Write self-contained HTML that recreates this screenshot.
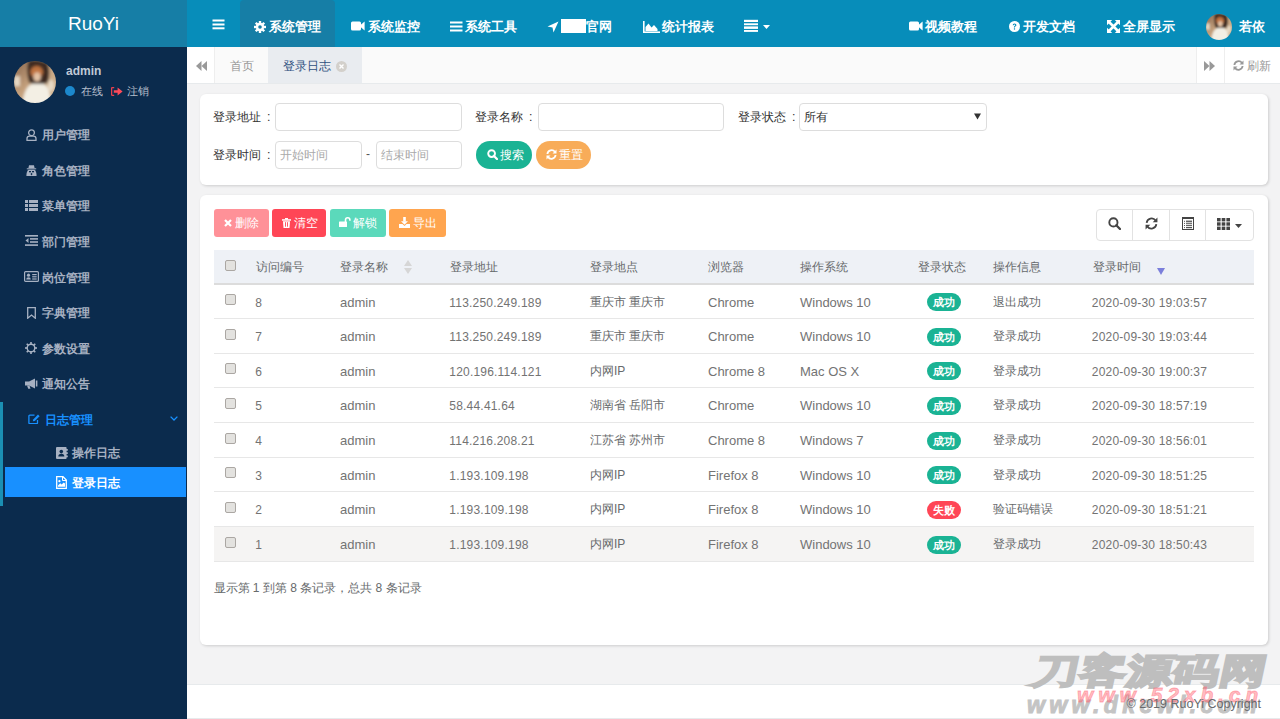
<!DOCTYPE html>
<html><head><meta charset="utf-8">
<style>
*{box-sizing:border-box;margin:0;padding:0}
html,body{width:1280px;height:719px;overflow:hidden}
body{position:relative;background:#f3f3f4;font-family:"Liberation Sans",sans-serif;font-size:12px;color:#676a6c}
.a{position:absolute}
.t{position:absolute;white-space:nowrap;line-height:20px}
#side{left:0;top:0;width:187px;height:719px;background:#0b2b4d}
#logo{left:0;top:0;width:187px;height:47px;background:#167ea6;color:#fff;font-size:19px;text-align:center;line-height:47px}
#nav{left:187px;top:0;width:1093px;height:47px;background:#078dba}
.ni{color:#fff;font-weight:bold;font-size:13px}
#tabs{left:187px;top:47px;width:1093px;height:37px;background:#fafafa;border-bottom:1px solid #e7eaec}
.panel{background:#fff;border-radius:6px;box-shadow:1px 1px 3px rgba(0,0,0,.16)}
.lbl{color:#333;font-size:12.3px;margin-left:-1px}
.inp{background:#fff;border:1px solid #ddd;border-radius:4px}
.btn{color:#fff;font-size:12px;text-align:center;border-radius:3px;line-height:28px}
.mi{font-size:12px;font-weight:600;color:#a7b1c2}
.avatar{border-radius:50%;background:radial-gradient(circle at 50% 65%,#f3eee6 0,#e9e0d2 22%,#c9a98a 45%,#8a6247 70%,#5d3f2d 100%)}
.th{color:#676a6c;font-size:12px}
.td{color:#737373;font-size:13px;margin-top:0.8px}
.tdn{font-size:12px;letter-spacing:0.2px;margin-left:-0.7px}
.tdc{font-size:12px;color:#676a6c;margin-top:0}
.row{left:213px;width:1041px;height:35px;border-bottom:1px solid #e7eaec}
.cb{width:11px;height:11px;border:1px solid #aba7a3;border-radius:2px;background:#e3e2df}
.badge{width:34px;height:18px;border-radius:9px;color:#fff;font-weight:bold;font-size:11px;text-align:center;line-height:18px}
</style></head><body>


<div id="side" class="a">
  <div id="logo" class="a">RuoYi</div>
  <svg class="a" style="left:14px;top:61px" width="42" height="42" viewBox="0 0 50 50"><defs><clipPath id="av1"><circle cx="25" cy="25" r="25"/></clipPath><filter id="av1f" x="-10%" y="-10%" width="120%" height="120%"><feGaussianBlur stdDeviation="1.6"/></filter><linearGradient id="av1g" x1="0" y1="0" x2="1" y2="1"><stop offset="0" stop-color="#7a5a44"/><stop offset="0.45" stop-color="#c4a07c"/><stop offset="1" stop-color="#dcc3a2"/></linearGradient></defs><g clip-path="url(#av1)"><g filter="url(#av1f)"><rect x="-5" y="-5" width="60" height="60" fill="url(#av1g)"/><rect x="0" y="18" width="7" height="12" fill="#f4ecdc" opacity=".8"/><path d="M17 0 Q28 -3 40 2 Q44 14 40 26 Q30 30 18 26 Q14 12 17 0 Z" fill="#3d2b22"/><ellipse cx="27" cy="13" rx="7.5" ry="7" fill="#c0733f"/><ellipse cx="27.5" cy="19" rx="4.5" ry="5.5" fill="#e4c3a6"/><path d="M10 52 Q12 30 22 27 H34 Q44 29 43 52 Z" fill="#f3efe4"/><ellipse cx="44" cy="29" rx="3.5" ry="7" fill="#efe6d4" opacity=".8"/></g></g></svg>
  <div class="t" style="left:66px;top:61px;font-size:12px;font-weight:bold;color:#c0c9d6">admin</div>
  <div class="a" style="left:65px;top:86px;width:10px;height:10px;border-radius:50%;background:#1c88cc"></div>
  <div class="t" style="left:81px;top:81px;font-size:11px;color:#b5becb">在线</div>
  <svg class="a" style="left:111px;top:87px" width="12" height="9" viewBox="0 0 12 9"><path d="M3.2 0.6 H1.4 Q0.6 0.6 0.6 1.4 V7.6 Q0.6 8.4 1.4 8.4 H3.2" fill="none" stroke="#e8404f" stroke-width="1.3"/><path d="M2.8 3.2 H6.6 V0.4 L11.6 4.5 L6.6 8.6 V5.8 H2.8 Z" fill="#ff4a5a"/></svg>
  <div class="t" style="left:127px;top:81px;font-size:11px;color:#b5becb">注销</div>
<svg class="a" style="left:26px;top:128.5px" width="11" height="12" viewBox="0 0 11 12"><circle cx="5.5" cy="3.8" r="2.9" fill="none" stroke="#a7b1c2" stroke-width="1.3"/><path d="M1 11.3 V9.5 Q1 7.2 3.5 7.2 H7.5 Q10 7.2 10 9.5 V11.3 Z" fill="none" stroke="#a7b1c2" stroke-width="1.3"/></svg>
<div class="t mi" style="left:42px;top:125px">用户管理</div>
<svg class="a" style="left:26px;top:164.5px" width="11" height="11" viewBox="0 0 11 11"><g fill="#a7b1c2"><path d="M3 0.3 H8 L8.6 3.2 H2.4 Z"/><rect x="0.8" y="3.3" width="9.4" height="1"/><path d="M2.6 4.8 H8.4 Q10.6 6 10.6 11 H0.4 Q0.4 6 2.6 4.8 Z"/></g><g fill="#0b2b4d"><rect x="3" y="6" width="2" height="1.3"/><rect x="6" y="6" width="2" height="1.3"/><path d="M4.5 9 L5.5 7.8 L6.5 9 L5.5 10.5 Z"/></g></svg>
<div class="t mi" style="left:42px;top:160.5px">角色管理</div>
<svg class="a" style="left:25px;top:199.5px" width="13" height="11" viewBox="0 0 13 11"><g fill="#a7b1c2"><rect x="0" y="0" width="3" height="3"/><rect x="4" y="0" width="9" height="3"/><rect x="0" y="4" width="3" height="3"/><rect x="4" y="4" width="9" height="3"/><rect x="0" y="8" width="3" height="3"/><rect x="4" y="8" width="9" height="3"/></g></svg>
<div class="t mi" style="left:42px;top:196px">菜单管理</div>
<svg class="a" style="left:25px;top:235px" width="13" height="11" viewBox="0 0 13 11"><g fill="#a7b1c2"><rect x="0" y="0" width="13" height="1.6"/><rect x="5" y="3.1" width="8" height="1.6"/><rect x="5" y="6.2" width="8" height="1.6"/><rect x="0" y="9.3" width="13" height="1.6"/><path d="M3.5 3 L0.5 5.5 L3.5 8 Z"/></g></svg>
<div class="t mi" style="left:42px;top:231.5px">部门管理</div>
<svg class="a" style="left:24px;top:271px" width="15" height="11" viewBox="0 0 15 11"><rect x="0.6" y="0.6" width="13.8" height="9.8" rx="1" fill="none" stroke="#a7b1c2" stroke-width="1.2"/><circle cx="4.5" cy="4.2" r="1.6" fill="#a7b1c2"/><path d="M2.2 8.6 Q2.2 6.3 4.5 6.3 Q6.8 6.3 6.8 8.6 Z" fill="#a7b1c2"/><rect x="8.2" y="3" width="4.5" height="1.2" fill="#a7b1c2"/><rect x="8.2" y="5.2" width="4.5" height="1.2" fill="#a7b1c2"/><rect x="8.2" y="7.4" width="4.5" height="1.2" fill="#a7b1c2"/></svg>
<div class="t mi" style="left:42px;top:267.5px">岗位管理</div>
<svg class="a" style="left:27px;top:306.5px" width="9" height="12" viewBox="0 0 9 12"><path d="M0.7 0.7 H8.3 V11.2 L4.5 8 L0.7 11.2 Z" fill="none" stroke="#a7b1c2" stroke-width="1.3"/></svg>
<div class="t mi" style="left:42px;top:303px">字典管理</div>
<svg class="a" style="left:25px;top:342px" width="12" height="12" viewBox="0 0 12 12"><circle cx="6" cy="6" r="3.8" fill="none" stroke="#a7b1c2" stroke-width="1.4"/><g fill="#a7b1c2"><rect x="5.2" y="0" width="1.6" height="2.2"/><rect x="5.2" y="9.8" width="1.6" height="2.2"/><rect x="0" y="5.2" width="2.2" height="1.6"/><rect x="9.8" y="5.2" width="2.2" height="1.6"/><rect x="5.2" y="0" width="1.6" height="2.2" transform="rotate(45 6 6)"/><rect x="5.2" y="9.8" width="1.6" height="2.2" transform="rotate(45 6 6)"/><rect x="0" y="5.2" width="2.2" height="1.6" transform="rotate(45 6 6)"/><rect x="9.8" y="5.2" width="2.2" height="1.6" transform="rotate(45 6 6)"/></g></svg>
<div class="t mi" style="left:42px;top:338.5px">参数设置</div>
<svg class="a" style="left:25px;top:377.5px" width="13" height="11" viewBox="0 0 13 11"><g fill="#a7b1c2"><path d="M0 3.5 H4 L10 0.5 V10.5 L4 7.5 H0 Z"/><rect x="10.8" y="2.5" width="1.6" height="6"/><path d="M2 7.5 H4.5 L5.5 10.8 H3.2 Z"/></g></svg>
<div class="t mi" style="left:42px;top:374px">通知公告</div>
  <div class="a" style="left:0;top:402px;width:3px;height:104px;background:#1b8fb3"></div>
  <svg class="a" style="left:27.5px;top:413.8px" width="13" height="10.5" viewBox="0 0 13 10.5"><path d="M6.5 1.2 H1.8 Q0.9 1.2 0.9 2.1 V8.8 Q0.9 9.7 1.8 9.7 H8.6 Q9.5 9.7 9.5 8.8 V6" fill="none" stroke="#1890ff" stroke-width="1.3"/><path d="M4.8 7.2 L5.2 5.4 L10 0.6 L11.6 2.2 L6.8 7 Z" fill="#1890ff"/></svg>
  <div class="t mi" style="left:45px;top:409.5px;color:#1890ff">日志管理</div>
  <svg class="a" style="left:170px;top:416px" width="8" height="5" viewBox="0 0 8 5"><path d="M0.6 0.6 L4 4 L7.4 0.6" fill="none" stroke="#1890ff" stroke-width="1.3"/></svg>
  <svg class="a" style="left:55.5px;top:446.5px" width="12" height="12" viewBox="0 0 12 12"><path d="M0 1 Q0 0 1 0 H9.8 Q10.6 0 10.6 1 V2 H11.8 V3.8 H10.6 V5.2 H11.8 V7 H10.6 V8.4 H11.8 V10.2 H10.6 V11 Q10.6 12 9.8 12 H1 Q0 12 0 11 Z" fill="#a7b1c2"/><circle cx="5.3" cy="4.6" r="1.8" fill="#0b2b4d"/><path d="M2.3 9.6 Q2.3 6.8 5.3 6.8 Q8.3 6.8 8.3 9.6 Z" fill="#0b2b4d"/></svg>
  <div class="t mi" style="left:72px;top:443px">操作日志</div>
  <div class="a" style="left:5px;top:467px;width:181px;height:30px;background:#1890ff"></div>
  <svg class="a" style="left:56px;top:476px" width="11" height="13" viewBox="0 0 11 13"><path d="M0.7 0.7 H7 L10.3 4 V12.3 H0.7 Z" fill="none" stroke="#fff" stroke-width="1.3"/><path d="M6.5 0.7 V4.5 H10.3" fill="none" stroke="#fff" stroke-width="1"/><path d="M2 10.8 V9.5 L4.2 7.2 L5.6 8.6 L7.8 6.4 L9 7.6 V10.8 Z" fill="#fff"/><circle cx="3.4" cy="5.2" r="1.1" fill="#fff"/></svg>
  <div class="t mi" style="left:72px;top:472.5px;color:#fff">登录日志</div>
</div>

<div id="nav" class="a"></div>

<div class="a" style="left:187px;top:0;width:1093px;height:47px">
  <svg class="a" style="left:25px;top:19px" width="13" height="11" viewBox="0 0 13 11"><g fill="#fff"><rect x="0.5" y="0.5" width="12" height="2"/><rect x="0.5" y="4.5" width="12" height="2"/><rect x="0.5" y="8.3" width="12" height="2"/></g></svg>
  <div class="a" style="left:53px;top:0;width:95px;height:47px;background:#167ea6;border-radius:4px 4px 0 0"></div>
</div>
<svg class="a" style="left:254px;top:20.5px" width="12" height="12" viewBox="0 0 12 12"><g fill="#fff"><circle cx="6" cy="6" r="4.2"/><rect x="4.8" y="0" width="2.4" height="12"/><rect x="0" y="4.8" width="12" height="2.4"/><rect x="4.8" y="0" width="2.4" height="12" transform="rotate(45 6 6)"/><rect x="4.8" y="0" width="2.4" height="12" transform="rotate(-45 6 6)"/></g><circle cx="6" cy="6" r="1.8" fill="#167ea6"/></svg>
<div class="t ni" style="left:269px;top:16.5px">系统管理</div>
<svg class="a" style="left:351px;top:21px" width="14" height="10" viewBox="0 0 14 10"><g fill="#fff"><rect x="0" y="0.4" width="10" height="9.2" rx="1.5"/><path d="M9 4.5 L13.6 0.6 V9.4 L9 5.5 Z"/></g></svg>
<div class="t ni" style="left:367.5px;top:16.5px">系统监控</div>
<svg class="a" style="left:449.5px;top:21px" width="13" height="11" viewBox="0 0 13 11"><g fill="#fff"><rect x="0" y="0.5" width="12.5" height="2"/><rect x="0" y="4.5" width="12.5" height="2"/><rect x="0" y="8.5" width="12.5" height="2"/></g></svg>
<div class="t ni" style="left:465px;top:16.5px">系统工具</div>
<svg class="a" style="left:546.5px;top:21px" width="12" height="12" viewBox="0 0 12 12"><path d="M11.5 0.5 L0.5 5.5 L5.5 6.5 L6.5 11.5 Z" fill="#fff"/></svg>
<div class="a" style="left:560.5px;top:19px;width:25.5px;height:13.8px;background:#fff"></div>
<div class="t ni" style="left:586px;top:16.5px">官网</div>
<svg class="a" style="left:642.5px;top:20.5px" width="17" height="12" viewBox="0 0 17 12"><g fill="#fff"><rect x="0" y="0" width="1.6" height="12"/><rect x="0" y="10.4" width="17" height="1.6"/><path d="M2.5 10 V6 L5.5 2.5 L8.5 6.5 L11 4 L14.5 8 V10 Z"/></g></svg>
<div class="t ni" style="left:661.5px;top:16.5px">统计报表</div>
<svg class="a" style="left:744px;top:19px" width="14" height="14" viewBox="0 0 14 14"><g fill="#fff"><rect x="0" y="0.8" width="14" height="2.2"/><rect x="0" y="4.3" width="14" height="1.9"/><rect x="0" y="7.4" width="14" height="2.5"/><rect x="0" y="11" width="14" height="1.9"/></g></svg>
<svg class="a" style="left:763px;top:24.5px" width="7" height="4" viewBox="0 0 7 4"><path d="M0 0 H7 L3.5 4 Z" fill="#fff"/></svg>
<svg class="a" style="left:909px;top:21px" width="14" height="10" viewBox="0 0 14 10"><g fill="#fff"><rect x="0" y="0.4" width="10" height="9.2" rx="1.5"/><path d="M9 4.5 L13.6 0.6 V9.4 L9 5.5 Z"/></g></svg>
<div class="t ni" style="left:925px;top:16.5px">视频教程</div>
<svg class="a" style="left:1009px;top:21px" width="11" height="11" viewBox="0 0 11 11"><circle cx="5.5" cy="5.5" r="5.5" fill="#fff"/><path d="M3.7 4.2 Q3.7 2.4 5.5 2.4 Q7.4 2.4 7.4 4 Q7.4 5 6.3 5.6 Q6 5.8 6 6.6 H4.9 Q4.9 5.4 5.6 5 Q6.2 4.6 6.2 4.1 Q6.2 3.4 5.5 3.4 Q4.8 3.4 4.8 4.2 Z" fill="#078dba"/><rect x="4.9" y="7.3" width="1.2" height="1.3" fill="#078dba"/></svg>
<div class="t ni" style="left:1023px;top:16.5px">开发文档</div>
<svg class="a" style="left:1107px;top:20px" width="13" height="13" viewBox="0 0 13 13"><g fill="#fff"><path d="M0 0 H5.2 L0 5.2 Z"/><path d="M13 0 V5.2 L7.8 0 Z"/><path d="M0 13 V7.8 L5.2 13 Z"/><path d="M13 13 H7.8 L13 7.8 Z"/></g><path d="M1.5 1.5 L11.5 11.5 M11.5 1.5 L1.5 11.5" stroke="#fff" stroke-width="2.6"/></svg>
<div class="t ni" style="left:1122.5px;top:16.5px">全屏显示</div>
<svg class="a" style="left:1206px;top:13.5px" width="26" height="26" viewBox="0 0 50 50"><defs><clipPath id="av2"><circle cx="25" cy="25" r="25"/></clipPath><filter id="av2f" x="-10%" y="-10%" width="120%" height="120%"><feGaussianBlur stdDeviation="1.6"/></filter><linearGradient id="av2g" x1="0" y1="0" x2="1" y2="1"><stop offset="0" stop-color="#7a5a44"/><stop offset="0.45" stop-color="#c4a07c"/><stop offset="1" stop-color="#dcc3a2"/></linearGradient></defs><g clip-path="url(#av2)"><g filter="url(#av2f)"><rect x="-5" y="-5" width="60" height="60" fill="url(#av2g)"/><rect x="0" y="18" width="7" height="12" fill="#f4ecdc" opacity=".8"/><path d="M17 0 Q28 -3 40 2 Q44 14 40 26 Q30 30 18 26 Q14 12 17 0 Z" fill="#3d2b22"/><ellipse cx="27" cy="13" rx="7.5" ry="7" fill="#c0733f"/><ellipse cx="27.5" cy="19" rx="4.5" ry="5.5" fill="#e4c3a6"/><path d="M10 52 Q12 30 22 27 H34 Q44 29 43 52 Z" fill="#f3efe4"/><ellipse cx="44" cy="29" rx="3.5" ry="7" fill="#efe6d4" opacity=".8"/></g></g></svg>
<div class="t ni" style="left:1238.5px;top:16.5px">若依</div>
<div id="tabs" class="a"></div>

<div class="a" style="left:187px;top:47px;width:28px;height:36px;background:#fff;border-right:1px solid #eee"></div>
<svg class="a" style="left:196px;top:60.5px" width="11" height="10" viewBox="0 0 11 10"><g fill="#999"><path d="M5.5 0 V10 L0 5 Z"/><path d="M11 0 V10 L5.5 5 Z"/></g></svg>
<div class="t" style="left:229.5px;top:55.5px;font-size:12px;color:#999">首页</div>
<div class="a" style="left:268px;top:47px;width:94px;height:36px;background:#e9ecf0"></div>
<div class="t" style="left:282.5px;top:55.5px;font-size:12px;color:#2f5180">登录日志</div>
<svg class="a" style="left:336px;top:60.5px" width="11" height="11" viewBox="0 0 11 11"><circle cx="5.5" cy="5.5" r="5.5" fill="#d3d0cb"/><path d="M3.5 3.5 L7.5 7.5 M7.5 3.5 L3.5 7.5" stroke="#fff" stroke-width="1.4"/></svg>
<div class="a" style="left:1196px;top:47px;width:29px;height:36px;background:#fff;border-left:1px solid #eee;border-right:1px solid #eee"></div>
<svg class="a" style="left:1204px;top:60.5px" width="11" height="10" viewBox="0 0 11 10"><g fill="#999"><path d="M0 0 V10 L5.5 5 Z"/><path d="M5.5 0 V10 L11 5 Z"/></g></svg>
<div class="a" style="left:1225px;top:47px;width:55px;height:36px;background:#fff"></div>
<svg class="a" style="left:1233px;top:59.5px" width="11" height="11" viewBox="0 0 11 11"><g fill="none" stroke="#999" stroke-width="1.8"><path d="M1.4 5 A4.2 4.2 0 0 1 9 3"/><path d="M9.6 6 A4.2 4.2 0 0 1 2 8"/></g><g fill="#999"><path d="M10.5 0.5 V4.5 H6.5 Z"/><path d="M0.5 10.5 V6.5 H4.5 Z"/></g></svg>
<div class="t" style="left:1247px;top:55.5px;font-size:12px;color:#999">刷新</div>

<div class="a panel" style="left:200px;top:94px;width:1068px;height:91px"></div>
<div class="t lbl" style="left:213.5px;top:107px">登录地址</div><div class="t lbl" style="left:268px;top:107px">:</div>
<div class="a inp" style="left:275px;top:103px;width:187px;height:28px"></div>
<div class="t lbl" style="left:475.5px;top:107px">登录名称</div><div class="t lbl" style="left:530px;top:107px">:</div>
<div class="a inp" style="left:538px;top:103px;width:186px;height:28px"></div>
<div class="t lbl" style="left:738.5px;top:107px">登录状态</div><div class="t lbl" style="left:793px;top:107px">:</div>
<div class="a inp" style="left:799px;top:103px;width:187.5px;height:28px"></div>
<div class="t" style="left:804px;top:106.5px;font-size:12px;color:#333">所有</div>
<svg class="a" style="left:974px;top:113px" width="7" height="7" viewBox="0 0 7 7"><path d="M0 0.5 H7 L3.5 6.5 Z" fill="#333"/></svg>
<div class="t lbl" style="left:213.5px;top:144.5px">登录时间</div><div class="t lbl" style="left:268px;top:144.5px">:</div>
<div class="a inp" style="left:275px;top:141px;width:87px;height:28px"></div>
<div class="t" style="left:280px;top:144.5px;font-size:12px;color:#aaa">开始时间</div>
<div class="t" style="left:366px;top:144px;font-size:12px;color:#555">-</div>
<div class="a inp" style="left:375.5px;top:141px;width:86.5px;height:28px"></div>
<div class="t" style="left:380.5px;top:144.5px;font-size:12px;color:#aaa">结束时间</div>
<div class="a" style="left:476px;top:140.5px;width:56px;height:28px;border-radius:14px;background:#1ab394"></div>
<svg class="a" style="left:486.5px;top:149px" width="11" height="11" viewBox="0 0 11 11"><circle cx="4.6" cy="4.6" r="3.4" fill="none" stroke="#fff" stroke-width="1.9"/><path d="M7 7 L10 10" stroke="#fff" stroke-width="2.2" stroke-linecap="round"/></svg>
<div class="t" style="left:499.5px;top:144.5px;font-size:12px;color:#fff">搜索</div>
<div class="a" style="left:536px;top:140.5px;width:55px;height:28px;border-radius:14px;background:#f8ac59"></div>
<svg class="a" style="left:545.5px;top:148.5px" width="11" height="11" viewBox="0 0 11 11"><g fill="none" stroke="#fff" stroke-width="1.8"><path d="M1.4 5 A4.2 4.2 0 0 1 9 3"/><path d="M9.6 6 A4.2 4.2 0 0 1 2 8"/></g><g fill="#fff"><path d="M10.5 0.5 V4.5 H6.5 Z"/><path d="M0.5 10.5 V6.5 H4.5 Z"/></g></svg>
<div class="t" style="left:558.5px;top:144.5px;font-size:12px;color:#fff">重置</div>


<div class="a panel" style="left:200px;top:195px;width:1068px;height:450px"></div>
<div class="a" style="left:213.5px;top:209px;width:55.5px;height:28px;border-radius:3px;background:#ff9198"></div><svg class="a" style="left:224px;top:219px" width="8" height="8" viewBox="0 0 8 8"><path d="M1 1 L7 7 M7 1 L1 7" stroke="#fff" stroke-width="2.2"/></svg><div class="t" style="left:235px;top:212.5px;font-size:12px;color:#fff">删除</div>
<div class="a" style="left:272px;top:209px;width:54px;height:28px;border-radius:3px;background:#ff4656"></div><svg class="a" style="left:282px;top:217.5px" width="9" height="10" viewBox="0 0 9 10"><g fill="#fff"><rect x="0" y="1.2" width="9" height="1.5"/><rect x="3" y="0" width="3" height="1.5"/><path d="M1 3.2 H8 L7.5 10 H1.5 Z"/></g><g fill="#ff4656"><rect x="3" y="4.2" width="0.9" height="4.5"/><rect x="5.1" y="4.2" width="0.9" height="4.5"/></g></svg><div class="t" style="left:294px;top:212.5px;font-size:12px;color:#fff">清空</div>
<div class="a" style="left:330px;top:209px;width:56px;height:28px;border-radius:3px;background:#5bd9bb"></div><svg class="a" style="left:339px;top:216.5px" width="12" height="10" viewBox="0 0 12 10"><path d="M6.5 5 V3 Q6.5 0.8 8.7 0.8 Q10.9 0.8 10.9 3 V3.8" fill="none" stroke="#fff" stroke-width="1.6"/><rect x="0" y="4.5" width="8" height="5.5" rx="0.6" fill="#fff"/></svg><div class="t" style="left:353px;top:212.5px;font-size:12px;color:#fff">解锁</div>
<div class="a" style="left:389px;top:209px;width:57px;height:28px;border-radius:3px;background:#ffa54f"></div><svg class="a" style="left:399px;top:216.5px" width="11" height="11" viewBox="0 0 11 11"><g fill="#fff"><rect x="4.2" y="0" width="2.6" height="4.5"/><path d="M2 4.2 H9 L5.5 7.8 Z"/><path d="M0 7 H3.5 L5.5 9 L7.5 7 H11 V11 H0 Z"/></g></svg><div class="t" style="left:413px;top:212.5px;font-size:12px;color:#fff">导出</div>
<div class="a" style="left:1095.5px;top:209px;width:158px;height:31.5px;border:1px solid #e2e2e2;border-radius:4px;background:#fff"></div>
<div class="a" style="left:1132px;top:210px;width:1px;height:29.5px;background:#e2e2e2"></div>
<div class="a" style="left:1168.5px;top:210px;width:1px;height:29.5px;background:#e2e2e2"></div>
<div class="a" style="left:1205px;top:210px;width:1px;height:29.5px;background:#e2e2e2"></div>
<svg class="a" style="left:1108px;top:217px" width="13" height="13" viewBox="0 0 13 13"><circle cx="5.4" cy="5.4" r="4.1" fill="none" stroke="#444" stroke-width="1.9"/><path d="M8.3 8.3 L12 12" stroke="#444" stroke-width="2.3" stroke-linecap="round"/></svg>
<svg class="a" style="left:1144.5px;top:216.8px" width="13" height="13" viewBox="0 0 11 11"><g fill="none" stroke="#444" stroke-width="1.5"><path d="M1.4 5 A4.2 4.2 0 0 1 9 3"/><path d="M9.6 6 A4.2 4.2 0 0 1 2 8"/></g><g fill="#444"><path d="M10.5 0.5 V4.5 H6.5 Z"/><path d="M0.5 10.5 V6.5 H4.5 Z"/></g></svg>
<svg class="a" style="left:1182px;top:217px" width="12" height="13" viewBox="0 0 12 13"><rect x="0.5" y="0.5" width="11" height="12" fill="none" stroke="#444" stroke-width="1"/><rect x="0" y="0" width="12" height="2" fill="#444"/><g fill="#555"><rect x="2" y="3.8" width="1" height="1"/><rect x="2" y="5.9" width="1" height="1"/><rect x="2" y="8" width="1" height="1"/><rect x="2" y="10.1" width="1" height="1"/><rect x="4" y="3.6" width="6" height="1.3"/><rect x="4" y="5.7" width="6" height="1.1"/><rect x="4" y="7.8" width="6" height="1.1"/><rect x="4" y="9.9" width="6" height="1.3"/></g></svg>
<svg class="a" style="left:1217px;top:218px" width="13" height="12" viewBox="0 0 13 12"><g fill="#444"><rect x="0" y="0" width="3.6" height="3.4"/><rect x="4.7" y="0" width="3.6" height="3.4"/><rect x="9.4" y="0" width="3.6" height="3.4"/><rect x="0" y="4.3" width="3.6" height="3.4"/><rect x="4.7" y="4.3" width="3.6" height="3.4"/><rect x="9.4" y="4.3" width="3.6" height="3.4"/><rect x="0" y="8.6" width="3.6" height="3.4"/><rect x="4.7" y="8.6" width="3.6" height="3.4"/><rect x="9.4" y="8.6" width="3.6" height="3.4"/></g></svg>
<svg class="a" style="left:1234.5px;top:223.5px" width="7" height="4" viewBox="0 0 7 4"><path d="M0 0 H7 L3.5 4 Z" fill="#444"/></svg>
<div class="a" style="left:213.5px;top:250px;width:1040.5px;height:35px;background:#eef1f6;border-bottom:2px solid #dcdcdc"></div>
<div class="a cb" style="left:225px;top:259.70px"></div>
<div class="t th" style="left:256px;top:256.5px">访问编号</div>
<div class="t th" style="left:340px;top:256.5px">登录名称</div>
<div class="t th" style="left:450px;top:256.5px">登录地址</div>
<div class="t th" style="left:590px;top:256.5px">登录地点</div>
<div class="t th" style="left:708px;top:256.5px">浏览器</div>
<div class="t th" style="left:800px;top:256.5px">操作系统</div>
<div class="t th" style="left:918px;top:256.5px">登录状态</div>
<div class="t th" style="left:993px;top:256.5px">操作信息</div>
<div class="t th" style="left:1092.5px;top:256.5px">登录时间</div>
<svg class="a" style="left:404px;top:259.5px" width="8" height="14" viewBox="0 0 8 14"><g fill="#d6d6d6"><path d="M4 0 L8 6 H0 Z"/><path d="M0 8 H8 L4 14 Z"/></g></svg>
<svg class="a" style="left:1156.5px;top:267.5px" width="8" height="7" viewBox="0 0 8 7"><path d="M0 0 H8 L4 7 Z" fill="#7b7fdb"/></svg>
<div class="a" style="left:213.5px;top:285px;width:1040.5px;height:34px;background:#fff;border-bottom:1px solid #e7e7e7"></div>
<div class="a cb" style="left:225px;top:294.30px"></div>
<div class="t td tdn" style="left:256px;top:291.80px">8</div>
<div class="t td" style="left:340px;top:291.80px">admin</div>
<div class="t td tdn" style="left:450px;top:291.80px">113.250.249.189</div>
<div class="t td tdc" style="left:590px;top:291.80px">重庆市 重庆市</div>
<div class="t td" style="left:708px;top:291.80px">Chrome</div>
<div class="t td" style="left:800px;top:291.80px">Windows 10</div>
<div class="a badge" style="left:927px;top:293.10px;background:#1ab394">成功</div>
<div class="t td tdc" style="left:993px;top:291.80px">退出成功</div>
<div class="t td tdn" style="left:1092.5px;top:291.80px">2020-09-30 19:03:57</div>
<div class="a" style="left:213.5px;top:319px;width:1040.5px;height:35px;background:#fff;border-bottom:1px solid #e7e7e7"></div>
<div class="a cb" style="left:225px;top:328.80px"></div>
<div class="t td tdn" style="left:256px;top:326.30px">7</div>
<div class="t td" style="left:340px;top:326.30px">admin</div>
<div class="t td tdn" style="left:450px;top:326.30px">113.250.249.189</div>
<div class="t td tdc" style="left:590px;top:326.30px">重庆市 重庆市</div>
<div class="t td" style="left:708px;top:326.30px">Chrome</div>
<div class="t td" style="left:800px;top:326.30px">Windows 10</div>
<div class="a badge" style="left:927px;top:327.60px;background:#1ab394">成功</div>
<div class="t td tdc" style="left:993px;top:326.30px">登录成功</div>
<div class="t td tdn" style="left:1092.5px;top:326.30px">2020-09-30 19:03:44</div>
<div class="a" style="left:213.5px;top:354px;width:1040.5px;height:34px;background:#fff;border-bottom:1px solid #e7e7e7"></div>
<div class="a cb" style="left:225px;top:363.30px"></div>
<div class="t td tdn" style="left:256px;top:360.80px">6</div>
<div class="t td" style="left:340px;top:360.80px">admin</div>
<div class="t td tdn" style="left:450px;top:360.80px">120.196.114.121</div>
<div class="t td tdc" style="left:590px;top:360.80px">内网IP</div>
<div class="t td" style="left:708px;top:360.80px">Chrome 8</div>
<div class="t td" style="left:800px;top:360.80px">Mac OS X</div>
<div class="a badge" style="left:927px;top:362.10px;background:#1ab394">成功</div>
<div class="t td tdc" style="left:993px;top:360.80px">登录成功</div>
<div class="t td tdn" style="left:1092.5px;top:360.80px">2020-09-30 19:00:37</div>
<div class="a" style="left:213.5px;top:388px;width:1040.5px;height:35px;background:#fff;border-bottom:1px solid #e7e7e7"></div>
<div class="a cb" style="left:225px;top:397.80px"></div>
<div class="t td tdn" style="left:256px;top:395.30px">5</div>
<div class="t td" style="left:340px;top:395.30px">admin</div>
<div class="t td tdn" style="left:450px;top:395.30px">58.44.41.64</div>
<div class="t td tdc" style="left:590px;top:395.30px">湖南省 岳阳市</div>
<div class="t td" style="left:708px;top:395.30px">Chrome</div>
<div class="t td" style="left:800px;top:395.30px">Windows 10</div>
<div class="a badge" style="left:927px;top:396.60px;background:#1ab394">成功</div>
<div class="t td tdc" style="left:993px;top:395.30px">登录成功</div>
<div class="t td tdn" style="left:1092.5px;top:395.30px">2020-09-30 18:57:19</div>
<div class="a" style="left:213.5px;top:423px;width:1040.5px;height:35px;background:#fff;border-bottom:1px solid #e7e7e7"></div>
<div class="a cb" style="left:225px;top:432.80px"></div>
<div class="t td tdn" style="left:256px;top:430.30px">4</div>
<div class="t td" style="left:340px;top:430.30px">admin</div>
<div class="t td tdn" style="left:450px;top:430.30px">114.216.208.21</div>
<div class="t td tdc" style="left:590px;top:430.30px">江苏省 苏州市</div>
<div class="t td" style="left:708px;top:430.30px">Chrome 8</div>
<div class="t td" style="left:800px;top:430.30px">Windows 7</div>
<div class="a badge" style="left:927px;top:431.60px;background:#1ab394">成功</div>
<div class="t td tdc" style="left:993px;top:430.30px">登录成功</div>
<div class="t td tdn" style="left:1092.5px;top:430.30px">2020-09-30 18:56:01</div>
<div class="a" style="left:213.5px;top:458px;width:1040.5px;height:34px;background:#fff;border-bottom:1px solid #e7e7e7"></div>
<div class="a cb" style="left:225px;top:467.30px"></div>
<div class="t td tdn" style="left:256px;top:464.80px">3</div>
<div class="t td" style="left:340px;top:464.80px">admin</div>
<div class="t td tdn" style="left:450px;top:464.80px">1.193.109.198</div>
<div class="t td tdc" style="left:590px;top:464.80px">内网IP</div>
<div class="t td" style="left:708px;top:464.80px">Firefox 8</div>
<div class="t td" style="left:800px;top:464.80px">Windows 10</div>
<div class="a badge" style="left:927px;top:466.10px;background:#1ab394">成功</div>
<div class="t td tdc" style="left:993px;top:464.80px">登录成功</div>
<div class="t td tdn" style="left:1092.5px;top:464.80px">2020-09-30 18:51:25</div>
<div class="a" style="left:213.5px;top:492px;width:1040.5px;height:35px;background:#fff;border-bottom:1px solid #e7e7e7"></div>
<div class="a cb" style="left:225px;top:501.80px"></div>
<div class="t td tdn" style="left:256px;top:499.30px">2</div>
<div class="t td" style="left:340px;top:499.30px">admin</div>
<div class="t td tdn" style="left:450px;top:499.30px">1.193.109.198</div>
<div class="t td tdc" style="left:590px;top:499.30px">内网IP</div>
<div class="t td" style="left:708px;top:499.30px">Firefox 8</div>
<div class="t td" style="left:800px;top:499.30px">Windows 10</div>
<div class="a badge" style="left:927px;top:500.60px;background:#ff4656">失败</div>
<div class="t td tdc" style="left:993px;top:499.30px">验证码错误</div>
<div class="t td tdn" style="left:1092.5px;top:499.30px">2020-09-30 18:51:21</div>
<div class="a" style="left:213.5px;top:527px;width:1040.5px;height:35px;background:#f5f4f3;border-bottom:1px solid #e7e7e7"></div>
<div class="a cb" style="left:225px;top:536.80px"></div>
<div class="t td tdn" style="left:256px;top:534.30px">1</div>
<div class="t td" style="left:340px;top:534.30px">admin</div>
<div class="t td tdn" style="left:450px;top:534.30px">1.193.109.198</div>
<div class="t td tdc" style="left:590px;top:534.30px">内网IP</div>
<div class="t td" style="left:708px;top:534.30px">Firefox 8</div>
<div class="t td" style="left:800px;top:534.30px">Windows 10</div>
<div class="a badge" style="left:927px;top:535.60px;background:#1ab394">成功</div>
<div class="t td tdc" style="left:993px;top:534.30px">登录成功</div>
<div class="t td tdn" style="left:1092.5px;top:534.30px">2020-09-30 18:50:43</div>
<div class="t td tdc" style="left:213.5px;top:578px">显示第 1 到第 8 条记录，总共 8 条记录</div>
<div class="a" style="left:187px;top:684px;width:1093px;height:35px;background:#fff;border-top:1px solid #e7eaec;border-bottom:1px solid #e7eaec"></div>

<div class="t" style="left:1034px;top:642px;line-height:58px;font-size:46px;font-weight:bold;color:#bebebe;-webkit-text-stroke:3px #bebebe;transform:skewX(-12deg) scaleY(0.76);transform-origin:0 50%;letter-spacing:0.6px">刀客源码网</div>
<div class="t" style="left:1027px;top:690px;line-height:30px;font-size:23px;font-weight:bold;font-style:italic;color:#c4c4c4;-webkit-text-stroke:1px #c4c4c4;letter-spacing:4.4px">www.dkewl.com</div>
<div class="t" style="left:1077px;top:680px;line-height:30px;font-size:21px;font-weight:bold;font-style:italic;color:rgba(255,100,115,.45);-webkit-text-stroke:0.8px rgba(255,100,115,.45);letter-spacing:4.9px">www.52xb.cn</div>
<div class="t" style="left:1126.5px;top:694px;font-size:12.5px;color:#676a6c">© 2019 RuoYi Copyright</div>
</body></html>
